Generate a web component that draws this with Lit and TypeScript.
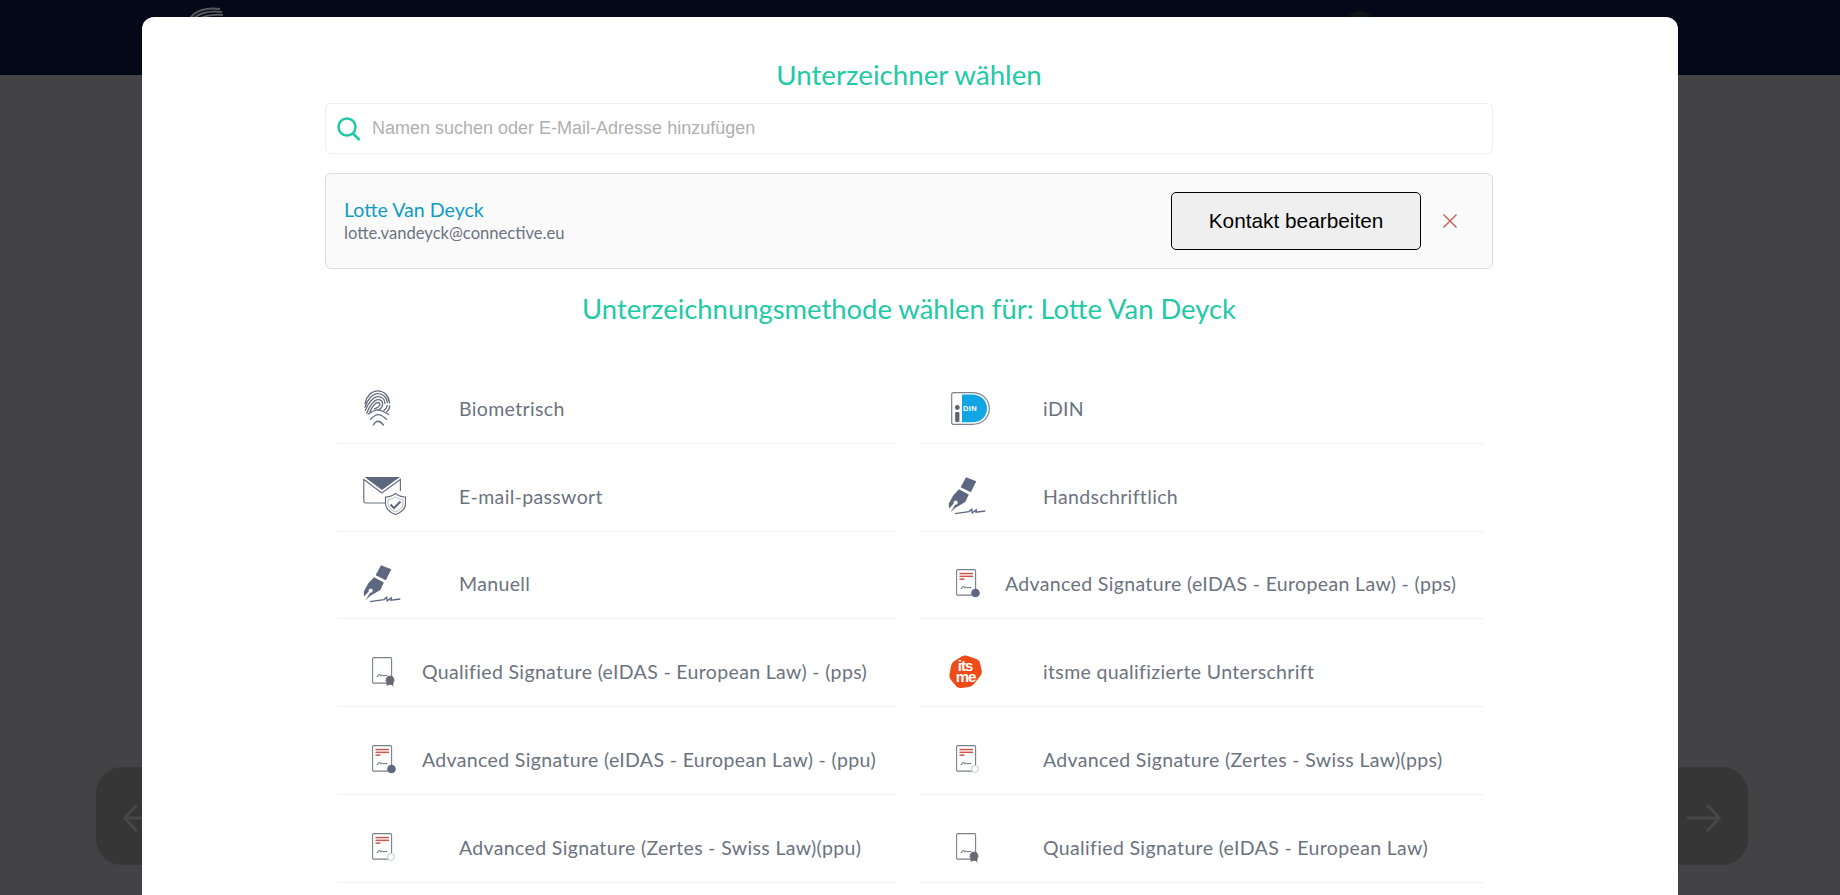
import { LitElement, html, css, svg } from "lit";
import { customElement } from "lit/decorators.js";

const pen = html`<svg class="ic" width="38" height="38" viewBox="0 0 38 38">
  <path d="M18 0.3 L28.3 4.3 L22.8 15.3 L12.6 10.3 Z" fill="#5d6880"/>
  <path d="M11 12.3 L20.8 17.5 L17.3 25 L7 31 L2.4 35.6 L7.2 27.6 A2 2 0 1 0 5.8 26.4 L1 31.5 L0.7 26.7 L5.3 18.3 Z" fill="#5d6880"/>
  <path d="M7 36.6 L21 34.6 L23.6 32.4 L24.2 35.8 L28.2 33 L28 35.2 L37.3 34" fill="none" stroke="#5d6880" stroke-width="1.4"/>
</svg>`;

const finger = html`<svg class="ic" width="27" height="37" viewBox="0 0 27 37">
  <g fill="none" stroke="#68707f" stroke-width="1.35" stroke-linecap="round">
    <path d="M1 13.5 C2.5 6 8 0.8 13.6 0.8 C20 0.8 25 6 25.5 13"/>
    <path d="M1 17.2 C3 9.5 9 3.6 14 3.6 C19 3.6 23 7.5 23.4 12.5"/>
    <path d="M1.4 20.4 C4 13 9.5 6.6 14 6.6 C18 6.6 20.8 9.5 21 13.5"/>
    <path d="M2.8 23 C5.5 16 10.5 9.6 14 9.6 C17 9.6 18.6 11.5 18.6 14.2 C18.6 16.6 16.5 19 14 20.2"/>
    <path d="M6 21.8 C8 16.5 11.5 12.5 14 12.5 C15.8 12.5 16.3 14 15.6 15.5 C14.5 17.5 12.5 18 10.5 19"/>
    <path d="M25.6 16 C25.6 18.5 24.5 20.5 22.8 21.8"/>
    <path d="M23.2 15.5 C23 17.5 21.8 19.2 20 20.2"/>
    <path d="M4 24.2 C7 22 10.5 19.8 13.6 19.8 C17.5 19.8 21 22 24.5 24.5"/>
    <path d="M6.5 29.2 C9 26.8 11.5 24.6 14 24.6 C17 24.6 20 26.8 22.5 29.2"/>
    <path d="M9.2 35 C10.5 33 12.5 31.2 14.2 31.2 C16 31.2 18 33 19.4 35"/>
  </g>
</svg>`;

const mail = html`<svg class="ic" width="43" height="38" viewBox="0 0 43 38">
  <path d="M22 26 L3 26 Q0.8 26 0.8 23.8 L0.8 2.5 L18.8 16 L37.4 2.5 L37.4 14" fill="none" stroke="#68707f" stroke-width="1.2"/>
  <path d="M1.5 0 L37 0 L19 13 Z" fill="#5d6880"/>
  <path d="M32.5 16.5 Q37 20 42.5 20 L42.5 27 Q42 34 32.5 37.5 Q23 34 22.5 27 L22.5 20 Q28 20 32.5 16.5 Z" fill="#fff" stroke="#68707f" stroke-width="1.2"/>
  <path d="M32.5 20 Q36 22.5 40 22.8 L40 27 Q39.5 32 32.5 35 Q25.5 32 25 27 L25 22.8 Q29 22.5 32.5 20 Z" fill="none" stroke="#8a909c" stroke-width="0.6"/>
  <path d="M27.5 27.5 L31 31 L37.5 24.5" fill="none" stroke="#5d6880" stroke-width="2"/>
</svg>`;

const doc = (lines: boolean, badge: "dot" | "ring" | "seal") => html`<svg class="ic" width="24" height="29" viewBox="0 0 24 29">
  <rect x="0.6" y="0.6" width="19" height="25.5" rx="1.2" fill="#fff" stroke="#79808c" stroke-width="1.1"/>
  ${lines ? svg`<g fill="#c9594c">
    <rect x="3.5" y="3.8" width="13.5" height="1.5"/>
    <rect x="3.5" y="6.6" width="13.5" height="1.5"/>
    <rect x="3.5" y="9.4" width="5" height="1.5"/>
  </g>` : ""}
  <path d="M5 20 C6.5 17 7.6 16.5 8 18.5 C8.4 20.5 9.5 17 10.5 18.3 C11.5 19.6 12.5 18 15 18.6" fill="none" stroke="#555b68" stroke-width="1"/>
  ${badge === "dot" ? svg`<circle cx="19.5" cy="24" r="4.3" fill="#5d6880"/>` : ""}
  ${badge === "ring" ? svg`<circle cx="19" cy="24" r="3.5" fill="#fff" stroke="#c4c7cc" stroke-width="0.9"/>` : ""}
  ${badge === "seal" ? svg`<path d="M15 25 L14.5 29 L18 27.6 L21.5 29 L21 25 Z" fill="#6a6672"/><circle cx="18" cy="23" r="3.9" fill="#6a6672" stroke="#6a6672" stroke-width="1.2" stroke-dasharray="1.2 .6"/>` : ""}
</svg>`;

const idin = html`<svg class="ic" width="39" height="33" viewBox="0 0 39 33">
  <path d="M2.5 0.7 L21 0.7 C32 0.7 38.3 8 38.3 16.5 C38.3 25 32 32.3 21 32.3 L2.5 32.3 Q0.7 32.3 0.7 30.5 L0.7 2.5 Q0.7 0.7 2.5 0.7 Z" fill="#fff" stroke="#7b838f" stroke-width="1.2"/>
  <path d="M11 2.5 L21 2.5 C30.5 2.5 36 9 36 16.5 C36 24 30.5 30.3 21 30.3 L11 30.3 Z" fill="#12a5e6"/>
  <circle cx="6.3" cy="15.5" r="2.4" fill="#5d6370"/>
  <rect x="4.2" y="20" width="4.2" height="10" rx="1" fill="#5d6370"/>
  <text x="12" y="18.5" class="din">DIN</text>
</svg>`;

const itsme = html`<svg class="ic" width="33" height="33" viewBox="0 0 33 33">
  <path d="M13 1.2 Q15.5 0 18 0.8 L27.5 4 Q30.3 5 31 7.8 L32.7 16 Q33.2 18.8 31.3 21 L25 29 Q23 31.5 20 32 L12 33 Q9 33.2 7 31 L2 25 Q0 22.5 0.5 19.5 L2 11 Q2.5 8 5 6.3 Z" fill="#ef4b19"/>
  <text x="16" y="15.8" class="its">its</text>
  <text x="16.5" y="26.5" class="its">me</text>
</svg>`;

type Row = { icon: unknown; off: number; label: string; long?: boolean };

const left: Row[] = [
  { icon: finger, off: 27, label: "Biometrisch" },
  { icon: mail, off: 26, label: "E-mail-passwort" },
  { icon: pen, off: 26, label: "Manuell" },
  { icon: doc(false, "seal"), off: 35, label: "Qualified Signature (eIDAS - European Law) - (pps)", long: true },
  { icon: doc(true, "dot"), off: 35, label: "Advanced Signature (eIDAS - European Law) - (ppu)", long: true },
  { icon: doc(true, "ring"), off: 35, label: "Advanced Signature (Zertes - Swiss Law)(ppu)" },
];
const right: Row[] = [
  { icon: idin, off: 31, label: "iDIN" },
  { icon: pen, off: 28, label: "Handschriftlich" },
  { icon: doc(true, "dot"), off: 36, label: "Advanced Signature (eIDAS - European Law) - (pps)", long: true },
  { icon: itsme, off: 29, label: "itsme qualifizierte Unterschrift" },
  { icon: doc(true, "ring"), off: 36, label: "Advanced Signature (Zertes - Swiss Law)(pps)" },
  { icon: doc(false, "seal"), off: 36, label: "Qualified Signature (eIDAS - European Law)" },
];

@customElement("app-root")
export class AppRoot extends LitElement {
  static styles = css`
    :host { display: block; position: relative; height: 895px; overflow: hidden; background: #434345; }
    .top { height: 75px; background: #040817; position: relative; }
    .logo { position: absolute; left: 186px; top: 6px; }
    .avatar { position: absolute; left: 1344px; top: 11px; width: 32px; height: 32px; border-radius: 50%; background: #0c1419; }
    .nav { position: absolute; left: 96px; top: 767px; width: 1652px; height: 98px; background: #363636; border-radius: 26px; }
    .nav svg { position: absolute; top: 37px; }
    .nav .back { left: 27px; }
    .nav .next { right: 27px; }
    .modal {
      position: absolute; left: 142px; top: 17px; width: 1536px; height: 900px; box-sizing: border-box;
      background: #fff; border-radius: 12px; padding: 41px 185px 0 183px;
      font-family: "Lato", "Noto Sans", sans-serif;
    }
    h2 { margin: 0; font-weight: 400; text-align: center; color: #22c9a5; font-size: 27.7px; line-height: 34px; }
    .search {
      display: flex; align-items: center; box-sizing: border-box; height: 51px; margin-top: 11px;
      border: 1px solid #eeeeee; border-radius: 6px; padding-left: 11px;
      font: 18px "Liberation Sans", Arial, sans-serif; color: #b0b0b0; gap: 11px;
    }
    .contact {
      display: flex; align-items: center; box-sizing: border-box; height: 96px; margin-top: 19px;
      border: 1px solid #dcdcdc; border-radius: 6px; background: #fafafa; padding: 0 34px 0 18px;
    }
    .who { flex: 1; }
    .name { color: #0f9cc4; font-size: 19.6px; line-height: 24px; }
    .mail { color: #6c7380; font-size: 16.6px; line-height: 22px; }
    button {
      box-sizing: border-box; width: 250px; height: 58px; background: #efefef; border: 1px solid #000;
      border-radius: 5px; font: 20.8px "Liberation Sans", Arial, sans-serif; color: #000; padding: 0; margin-right: 21px;
    }
    h2.sub { margin-top: 23px; font-size: 27.4px; }
    .grid { display: grid; grid-template-columns: 561px 564px; column-gap: 22px; padding: 0 0 0 12px; margin-top: 30px; }
    .row {
      display: flex; align-items: center; box-sizing: border-box; height: 87.75px; padding-top: 18px;
      border-bottom: 1px solid #f1f2f2; position: relative; color: #6c7380; font-size: 19.5px; letter-spacing: 0.35px;
    }
    .cell { position: absolute; top: 18px; bottom: 0; display: flex; align-items: center; }
    .ic { display: block; }
    .lab { margin-left: 122px; white-space: nowrap; }
    .rcol .lab { margin-left: 123px; }
    .lab.long, .rcol .lab.long { margin-left: 85px; }
    .din { font: 700 7.5px "Liberation Sans", Arial, sans-serif; fill: #fff; }
    .its { font: 700 15px "Liberation Sans", Arial, sans-serif; fill: #fff; text-anchor: middle; letter-spacing: -1px; }
  `;

  private col(rows: Row[]) {
    return rows.map(
      (r) => html`<div class="row">
        <div class="cell" style="left:${r.off}px">${r.icon}</div>
        <span class="lab ${r.long ? "long" : ""}">${r.label}</span>
      </div>`
    );
  }

  render() {
    return html`
      <div class="top">
        <svg class="logo" width="40" height="14" viewBox="0 0 40 14">
          <g fill="none" stroke="#55585c" stroke-width="2">
            <path d="M4 13 C8 5 20 1 34 3"/>
            <path d="M6 14 C11 8 22 4 36 6"/>
            <path d="M10 15 C15 11 24 8 37 9"/>
          </g>
        </svg>
        <div class="avatar"></div>
      </div>
      <div class="nav">
        <svg class="back" width="36" height="28" viewBox="0 0 36 28">
          <path d="M36 14 L2 14 M14 1 L1.5 14 L14 27" fill="none" stroke="#474747" stroke-width="3"/>
        </svg>
        <svg class="next" width="34" height="28" viewBox="0 0 34 28">
          <path d="M0 14 L32 14 M20 1 L32.5 14 L20 27" fill="none" stroke="#474747" stroke-width="3"/>
        </svg>
      </div>
      <div class="modal">
        <h2>Unterzeichner wählen</h2>
        <div class="search">
          <svg width="24" height="24" viewBox="0 0 24 24">
            <circle cx="10" cy="10" r="8.5" fill="none" stroke="#22c9a5" stroke-width="2.5"/>
            <path d="M15.5 16 L22.5 23" stroke="#22c9a5" stroke-width="2.6" fill="none"/>
          </svg>
          <span>Namen suchen oder E-Mail-Adresse hinzufügen</span>
        </div>
        <div class="contact">
          <div class="who">
            <div class="name">Lotte Van Deyck</div>
            <div class="mail">lotte.vandeyck@connective.eu</div>
          </div>
          <button>Kontakt bearbeiten</button>
          <svg width="16" height="16" viewBox="0 0 16 16">
            <path d="M1.5 1.5 L14.5 14.5 M14.5 1.5 L1.5 14.5" stroke="#c4574e" stroke-width="1.3" fill="none"/>
          </svg>
        </div>
        <h2 class="sub">Unterzeichnungsmethode wählen für: Lotte Van Deyck</h2>
        <div class="grid">
          <div>${this.col(left)}</div>
          <div class="rcol">${this.col(right)}</div>
        </div>
      </div>
    `;
  }
}
